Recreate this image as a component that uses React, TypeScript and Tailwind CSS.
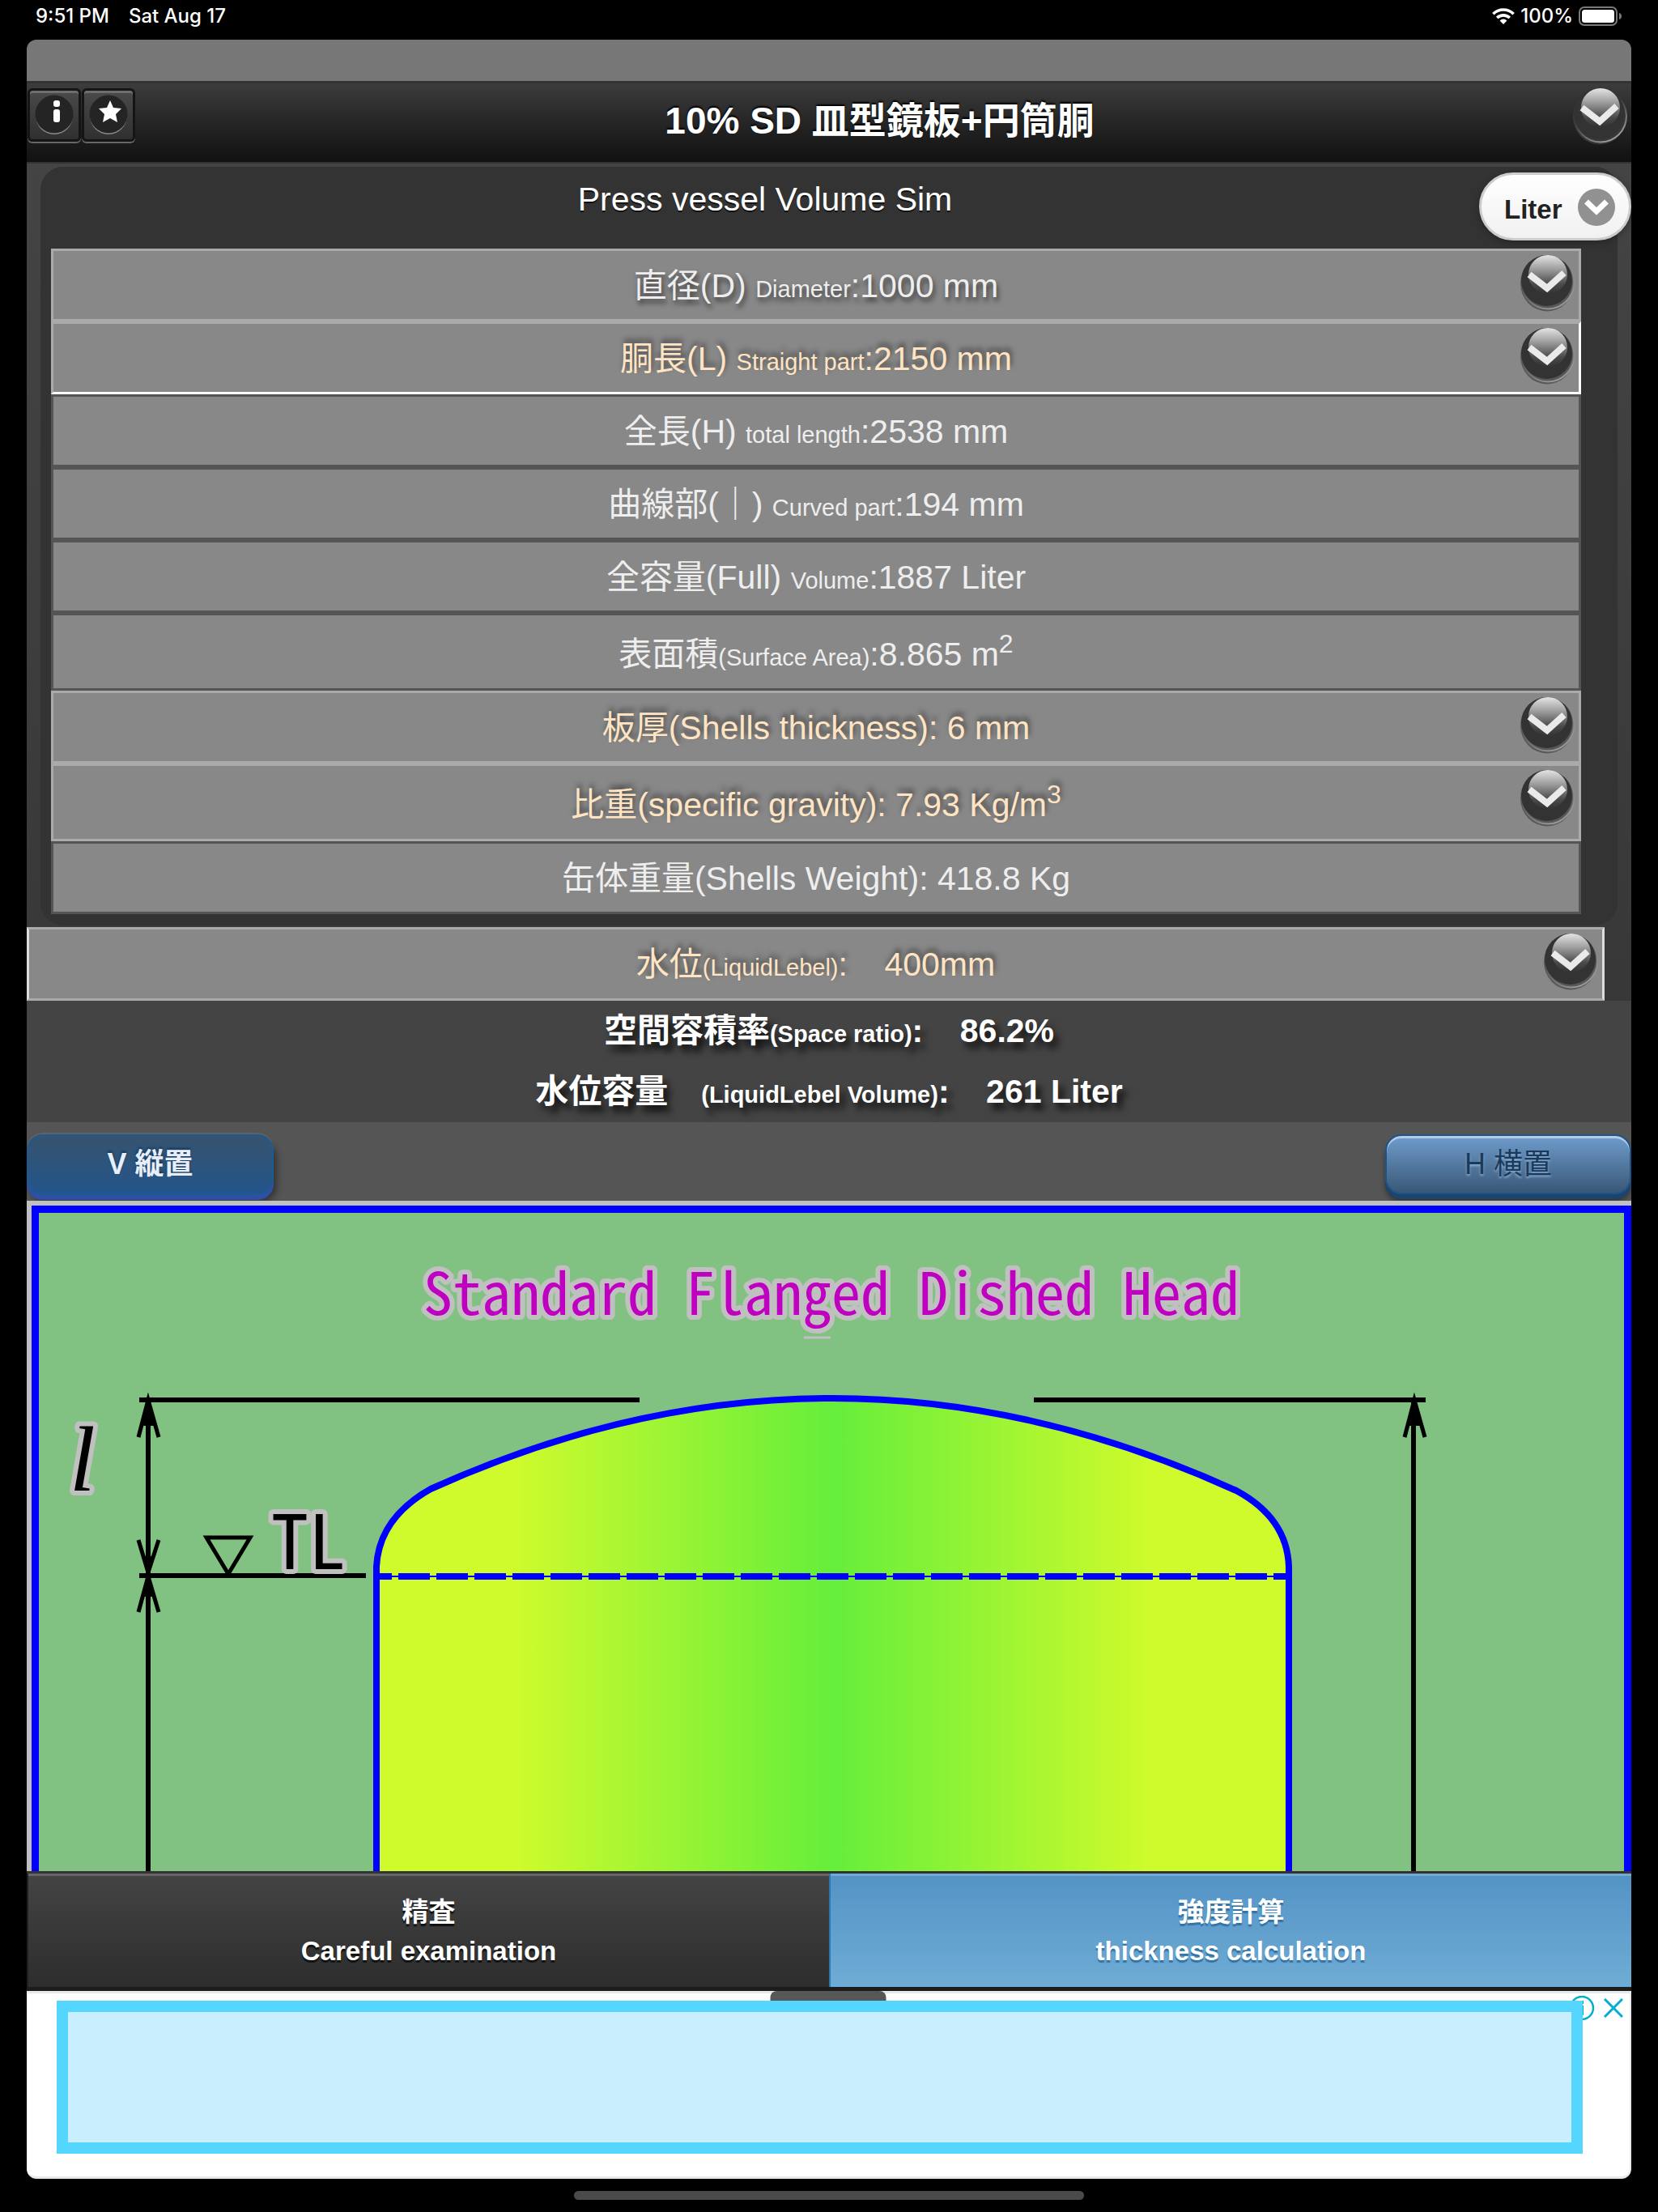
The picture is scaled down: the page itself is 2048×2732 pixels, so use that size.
import React, { useState } from 'react';

type Row = {
    id: string;
    label: React.ReactNode;
    editable?: boolean;
    tone: string;
    frame: string;
    tall?: boolean;
};

const PLAIN = 'text-[#eeeeee]';
const SHADE_BELOW = 'text-[#eeeeee] [text-shadow:2px_5px_6px_rgba(0,0,0,0.6)]';
const ACCENT = 'text-[#ffe4c4] [text-shadow:2px_-5px_6px_rgba(0,0,0,0.5)]';

const FRAME_DARK = 'border-[#555555]';
const FRAME_LIGHT = 'border-[#aaaaaa]';
const FRAME_ACTIVE = 'border-t-[#aaaaaa] border-l-[#aaaaaa] border-b-white border-r-white';

const Small: React.FC<{ children: React.ReactNode }> = ({ children }) => (
    <span className="text-[29px] leading-none">{children}</span>
);

const rows: Row[] = [
    { id: 'diameter', label: <>直径(D) <Small>Diameter</Small>:1000 mm</>, editable: true, tone: SHADE_BELOW, frame: FRAME_LIGHT },
    { id: 'straight', label: <>胴長(L) <Small>Straight part</Small>:2150 mm</>, editable: true, tone: ACCENT, frame: FRAME_ACTIVE },
    { id: 'total', label: <>全長(H) <Small>total length</Small>:2538 mm</>, tone: PLAIN, frame: FRAME_DARK },
    { id: 'curved', label: <>曲線部(｜) <Small>Curved part</Small>:194 mm</>, tone: PLAIN, frame: FRAME_DARK },
    { id: 'volume', label: <>全容量(Full) <Small>Volume</Small>:1887 Liter</>, tone: PLAIN, frame: FRAME_DARK },
    { id: 'surface', label: <>表面積<Small>(Surface Area)</Small>:8.865 m<sup className="text-[32px]">2</sup></>, tone: PLAIN, frame: FRAME_DARK, tall: true },
    { id: 'thickness', label: <>板厚(Shells thickness): 6 mm</>, editable: true, tone: ACCENT, frame: FRAME_LIGHT },
    { id: 'gravity', label: <>比重(specific gravity): 7.93 Kg/m<sup className="text-[32px]">3</sup></>, editable: true, tone: ACCENT, frame: FRAME_LIGHT, tall: true },
    { id: 'weight', label: <>缶体重量(Shells Weight): 418.8 Kg</>, tone: PLAIN, frame: FRAME_DARK }
];

const GlossyChevron: React.FC = () => (
    <svg width="68" height="74" viewBox="0 0 68 74" aria-hidden="true">
        <defs>
            <linearGradient id="gloss" x1="0" y1="0" x2="0" y2="1">
                <stop offset="0" stopColor="#e4e4e4" />
                <stop offset="0.35" stopColor="#a0a0a0" />
                <stop offset="0.75" stopColor="#4a4a4a" />
                <stop offset="1" stopColor="#333333" />
            </linearGradient>
            <linearGradient id="rim" x1="0" y1="0" x2="0.6" y2="1">
                <stop offset="0.45" stopColor="#8a8a8a" stopOpacity="0" />
                <stop offset="1" stopColor="#9a9a9a" />
            </linearGradient>
        </defs>
        <ellipse cx="34" cy="38" rx="33" ry="34.5" fill="#444444" opacity="0.7" />
        <circle cx="35" cy="37.5" r="32" fill="none" stroke="url(#rim)" strokeWidth="2" />
        <circle cx="33.5" cy="34.5" r="31.5" fill="#333333" />
        <circle cx="35" cy="27" r="24" fill="url(#gloss)" />
        <path d="M12 27 34 44 55 25" fill="none" stroke="#eaeaea" strokeWidth="8" />
    </svg>
);

const ToolButton: React.FC<{ label: string; children: React.ReactNode }> = ({ label, children }) => (
    <button
        type="button"
        aria-label={label}
        className="flex h-[66px] w-[66px] items-center justify-center rounded-md border-[3px] border-[#151515] bg-linear-to-b from-[#4a4a4a] to-[#303030] shadow-[0_2px_0_#666666,inset_0_3px_0_#6e6e6e]"
    >
        <svg width="48" height="50" viewBox="0 0 48 50" aria-hidden="true">
            <circle cx="24" cy="26" r="23" fill="#8c8c8c" />
            <circle cx="24" cy="24" r="23.5" fill="#242424" />
            {children}
        </svg>
    </button>
);

const StatusBar: React.FC = () => (
    <div className="flex h-[49px] items-start justify-between px-[44px] font-['Inter',sans-serif] text-2xl leading-[40px] font-medium text-white">
        <div className="flex gap-6">
            <span>9:51 PM</span>
            <span>Sat Aug 17</span>
        </div>
        <div className="flex h-10 items-center gap-[7px]">
            <svg width="28" height="20" viewBox="0 0 28 20" aria-hidden="true">
                <g fill="none" stroke="#ffffff" strokeWidth="3.6">
                    <path d="M1.4 7.2a18 18 0 0 1 25.2 0" />
                    <path d="M6.2 12a11.2 11.2 0 0 1 15.6 0" />
                </g>
                <path d="M14 20l-4.4-4.6a6.3 6.3 0 0 1 8.8 0z" fill="#ffffff" />
            </svg>
            <span>100%</span>
            <svg width="54" height="24" viewBox="0 0 54 24" aria-hidden="true">
                <rect x="1" y="1" width="46" height="22" rx="6" fill="none" stroke="#7a7a7a" strokeWidth="2" />
                <rect x="4" y="4" width="40" height="16" rx="3.5" fill="#ffffff" />
                <path d="M50 8c4 1 4 7 0 8z" fill="#7a7a7a" />
            </svg>
        </div>
    </div>
);

const VALUE_ROW = 'relative flex w-full items-center justify-center border-[3px] bg-[#888888] text-[41px] leading-[46px]';

const ValueRow: React.FC<{ row: Row }> = ({ row }) => {
    const height = row.tall ? 'h-24 pt-1.5' : 'h-[90px] pt-0.5';
    if (!row.editable) {
        return (
            <div className={`${VALUE_ROW} ${height} ${row.frame}`}>
                <span className={row.tone}>{row.label}</span>
            </div>
        );
    }
    return (
        <button type="button" className={`${VALUE_ROW} ${height} ${row.frame}`}>
            <span className={row.tone}>{row.label}</span>
            <span className="absolute top-0.5 right-[5px]">
                <GlossyChevron />
            </span>
        </button>
    );
};

// dished head elevation with its dimension lines
const VesselDrawing: React.FC = () => (
    <svg viewBox="48 1498 1958 813" className="block h-auto w-full" role="img" aria-label="Standard Flanged Dished Head">
        <defs>
            <linearGradient id="steel" gradientUnits="userSpaceOnUse" x1="465" y1="0" x2="1592" y2="0">
                <stop offset="0.15" stopColor="#cffb2c" />
                <stop offset="0.5" stopColor="#65ee3b" />
                <stop offset="0.85" stopColor="#cffb2c" />
            </linearGradient>
        </defs>

        <path
            d="M465 1935Q468 1875 532 1839 780 1727 1028 1727 1276 1727 1527 1841 1590 1875 1592 1935V2320H465Z"
            fill="url(#steel)"
        />
        <path d="M465 1947H1592" stroke="#0000ff" strokeWidth="2" />
        <path d="M466 1947H1592" stroke="#0000ff" strokeWidth="8" strokeDasharray="39 8" strokeDashoffset="21" />
        <path
            d="M465 1947V1935Q468 1875 532 1839 780 1727 1028 1727 1276 1727 1527 1841 1590 1875 1592 1935V1947"
            fill="none"
            stroke="#0000ff"
            strokeWidth="8"
        />
        <path d="M465 1940V2320M1592 1940V2320" stroke="#0000ff" strokeWidth="8" />

        <g fill="none" stroke="#000000" strokeWidth="6">
            <path d="M172 1729H790M1277 1729H1761M172 1946H452" />
            <path d="M183 1729V2320M1746 1729V2320" />
            <path d="M171 1775 183 1729 196 1775" strokeWidth="5" />
            <path d="M1735 1775 1747 1729 1760 1775" strokeWidth="5" />
            <path d="M171 1902 183 1942 196 1902" strokeWidth="5" />
            <path d="M171 1991 183 1947 196 1991" strokeWidth="5" />
            <path d="M255 1899H309L282 1944Z" strokeWidth="5" />
        </g>
        <path d="M184 1729l-7 32h14zM1747 1729l-7 32h14zM184 1946l-7-24h14zM184 1946l-7 26h14z" fill="#000000" />

        <g stroke="#c0c0c0" strokeWidth="12" strokeLinejoin="round" paintOrder="stroke">
            <text
                x="523"
                y="1624"
                fontSize="72"
                fill="#c000c0"
                className="font-['Noto_Sans_CJK_JP',monospace] [font-feature-settings:'hwid']"
            >
                Standard Flanged Dished Head
            </text>
            <text
                x="335"
                y="1938"
                fontSize="92"
                fill="#000000"
                className="font-['Noto_Sans_CJK_JP',monospace] [font-feature-settings:'hwid']"
            >
                TL
            </text>
            <text x="86" y="1841" fontSize="114" fill="#000000" className="font-['Liberation_Serif',serif] italic">
                l
            </text>
        </g>
        <path d="M993 1652H1026" stroke="#c0c0c0" strokeWidth="3" />
    </svg>
);

const App: React.FC = () => {
    const [unit, setUnit] = useState('Liter');

    return (
        <div className="flex min-h-screen flex-col bg-black font-['Liberation_Sans','Noto_Sans_CJK_JP',sans-serif]">
            <StatusBar />

            <main className="mx-[33px] flex flex-col overflow-hidden rounded-xl bg-[#777777]">
                <header className="mt-[51px] flex h-[102px] items-start border-t-[3px] border-b-2 border-[#333333] bg-linear-to-b from-[#3c3c3c] to-[#111111]">
                    <div className="mt-1.5 flex gap-px pl-px">
                        <ToolButton label="Info">
                            <rect x="23" y="7" width="8" height="8" rx="3" fill="#ffffff" />
                            <rect x="23" y="18" width="8" height="16" rx="3" fill="#ffffff" />
                        </ToolButton>
                        <ToolButton label="Favorites">
                            <path d="M26 7l4 9 10 1-7 7 2 10-9-5-9 5 2-10-7-7 10-1z" fill="#ffffff" />
                        </ToolButton>
                    </div>
                    <h1 className="flex-1 pl-16 text-center text-[46px] leading-[92px] font-bold text-white [text-shadow:0_-2px_2px_#000000]">
                        10% SD 皿型鏡板+円筒胴
                    </h1>
                    <button type="button" aria-label="Select head type" className="mt-[3px] mr-[5px]">
                        <GlossyChevron />
                    </button>
                </header>

                <section className="bg-linear-to-b from-[#444444] to-[#383838] pt-1">
                    <div className="mx-[17px] rounded-[28px] bg-[#333333] pt-[7px] pb-3.5 pl-[13px]">
                        <div className="-mr-[17px] mb-[10px] flex items-start">
                            <h2 className="flex-1 text-center text-[41px] leading-[66px] text-white [text-shadow:0_2px_0_#111111]">
                                Press vessel Volume Sim
                            </h2>
                            <div className="relative">
                                <select
                                    aria-label="Volume unit"
                                    value={unit}
                                    onChange={(e) => setUnit(e.target.value)}
                                    className="h-[84px] w-[188px] appearance-none rounded-full border-[3px] border-[#cccccc] bg-linear-to-b from-white to-[#f1f1f1] pt-2 pl-7 text-[33px] font-bold text-[#222222] shadow-[0_2px_8px_rgba(0,0,0,0.3)]"
                                >
                                    <option>Liter</option>
                                    <option>m3</option>
                                </select>
                                <svg
                                    width="46"
                                    height="46"
                                    viewBox="0 0 46 46"
                                    className="pointer-events-none absolute top-5 right-5"
                                    aria-hidden="true"
                                >
                                    <circle cx="23" cy="23" r="23" fill="#919191" />
                                    <path d="M10.500 16 23 28 35.500 16" fill="none" stroke="#ffffff" strokeWidth="7" />
                                </svg>
                            </div>
                        </div>
                        <div className="mr-[45px]">
                            {rows.map(row => (
                                <ValueRow key={row.id} row={row} />
                            ))}
                        </div>
                    </div>

                    <div className="mt-0.5 mr-[33px]">
                        <button type="button" className={`${VALUE_ROW} h-[91px] border-[#aaaaaa] border-x-[#dddddd]`}>
                            <span className={ACCENT}>
                                水位<Small>(LiquidLebel)</Small>:&nbsp;&nbsp;&nbsp; 400mm
                            </span>
                            <span className="absolute top-0.5 right-[5px]">
                                <GlossyChevron />
                            </span>
                        </button>
                    </div>
                </section>

                <section className="bg-[#444444] text-center text-[41px] leading-[75px] font-bold text-white [text-shadow:6px_8px_8px_rgba(0,0,0,0.8)]">
                    <p>
                        空間容積率<Small>(Space ratio)</Small>:&nbsp;&nbsp;&nbsp; 86.2%
                    </p>
                    <p>
                        水位容量　<Small>(LiquidLebel Volume)</Small>:&nbsp;&nbsp;&nbsp; 261 Liter
                    </p>
                </section>

                <section className="flex h-[97px] items-start justify-between bg-[#555555] pt-[15px] text-4xl">
                    <button
                        type="button"
                        className="h-[74px] w-[305px] rounded-[20px] border-2 border-[#1c5a94] bg-linear-to-b from-[#36536f] to-[#22558a] font-bold text-[#e6eff9] shadow-[0_7px_0_#2d50a5,4px_10px_8px_rgba(0,0,0,0.4),0_-2px_0_#626262] [text-shadow:0_-2px_3px_#12355a]"
                    >
                        V 縦置
                    </button>
                    <button
                        type="button"
                        className="h-[74px] w-[304px] rounded-[20px] border-2 border-[#1f5488] bg-linear-to-b from-[#6f9dcd] to-[#3a5877] text-[#1b3a5a] shadow-[inset_0_3px_0_#b4cbe4,0_6px_0_#1b446e,0_9px_6px_rgba(0,0,0,0.4)] [text-shadow:0_2px_3px_#8fb2d6]"
                    >
                        H 横置
                    </button>
                </section>

                <section className="relative bg-[#c0c0c0] pt-[6px] pl-[6px]">
                    <div className="border-x-[9px] border-t-[9px] border-[#0000ff] bg-[#81c181]">
                        <VesselDrawing />
                    </div>
                </section>

                <nav className="flex h-[148px] border-t-[3px] border-b-[5px] border-t-[#333333] border-b-[#1c1c1c] text-center text-[33px] leading-[48px] font-bold text-white">
                    <button
                        type="button"
                        className="flex-1 border-l-2 border-[#1f1f1f] bg-linear-to-b from-[#444444] to-[#2d2d2d] pt-1 shadow-[inset_0_3px_0_#666666] [text-shadow:0_3px_1px_#111111]"
                    >
                        精査<br />Careful examination
                    </button>
                    <button
                        type="button"
                        className="flex-1 border-l-2 border-[#2a7ab0] bg-linear-to-b from-[#5393c5] to-[#6facd5] pt-1 shadow-[inset_0_3px_0_#75a9d2] [text-shadow:0_3px_1px_#3373a5]"
                    >
                        強度計算<br />thickness calculation
                    </button>
                </nav>

                <aside className="relative rounded-b-xl border-t-[3px] border-r-2 border-b-[3px] border-[#e9e9e9] bg-white pt-[9px] pr-[58px] pb-7 pl-[37px]">
                    <span className="absolute -top-[3px] left-1/2 h-4 w-[143px] -translate-x-1/2 rounded-t-lg bg-[#575757]"></span>
                    <button type="button" aria-label="About this ad" className="absolute top-[3px] right-11">
                        <svg width="30" height="30" viewBox="0 0 30 30" aria-hidden="true">
                            <circle cx="15" cy="15" r="14" fill="none" stroke="#00aecd" strokeWidth="2.500" />
                            <path d="M15 6v4M15 12v12" stroke="#00aecd" strokeWidth="4" />
                        </svg>
                    </button>
                    <button type="button" aria-label="Close ad" className="absolute top-1.5 right-2">
                        <svg width="24" height="24" viewBox="0 0 24 24" aria-hidden="true">
                            <path d="M1 1 23 23M23 1 1 23" stroke="#00aecd" strokeWidth="3" />
                        </svg>
                    </button>
                    <div className="relative h-[189px] border-[14px] border-[#55d6ff] bg-[#c9efff]"></div>
                </aside>
            </main>

            <div className="mx-auto mt-[15px] mb-[15px] h-[11px] w-[630px] rounded-full bg-[#4b4b4b]"></div>
        </div>
    );
};

export default App;
